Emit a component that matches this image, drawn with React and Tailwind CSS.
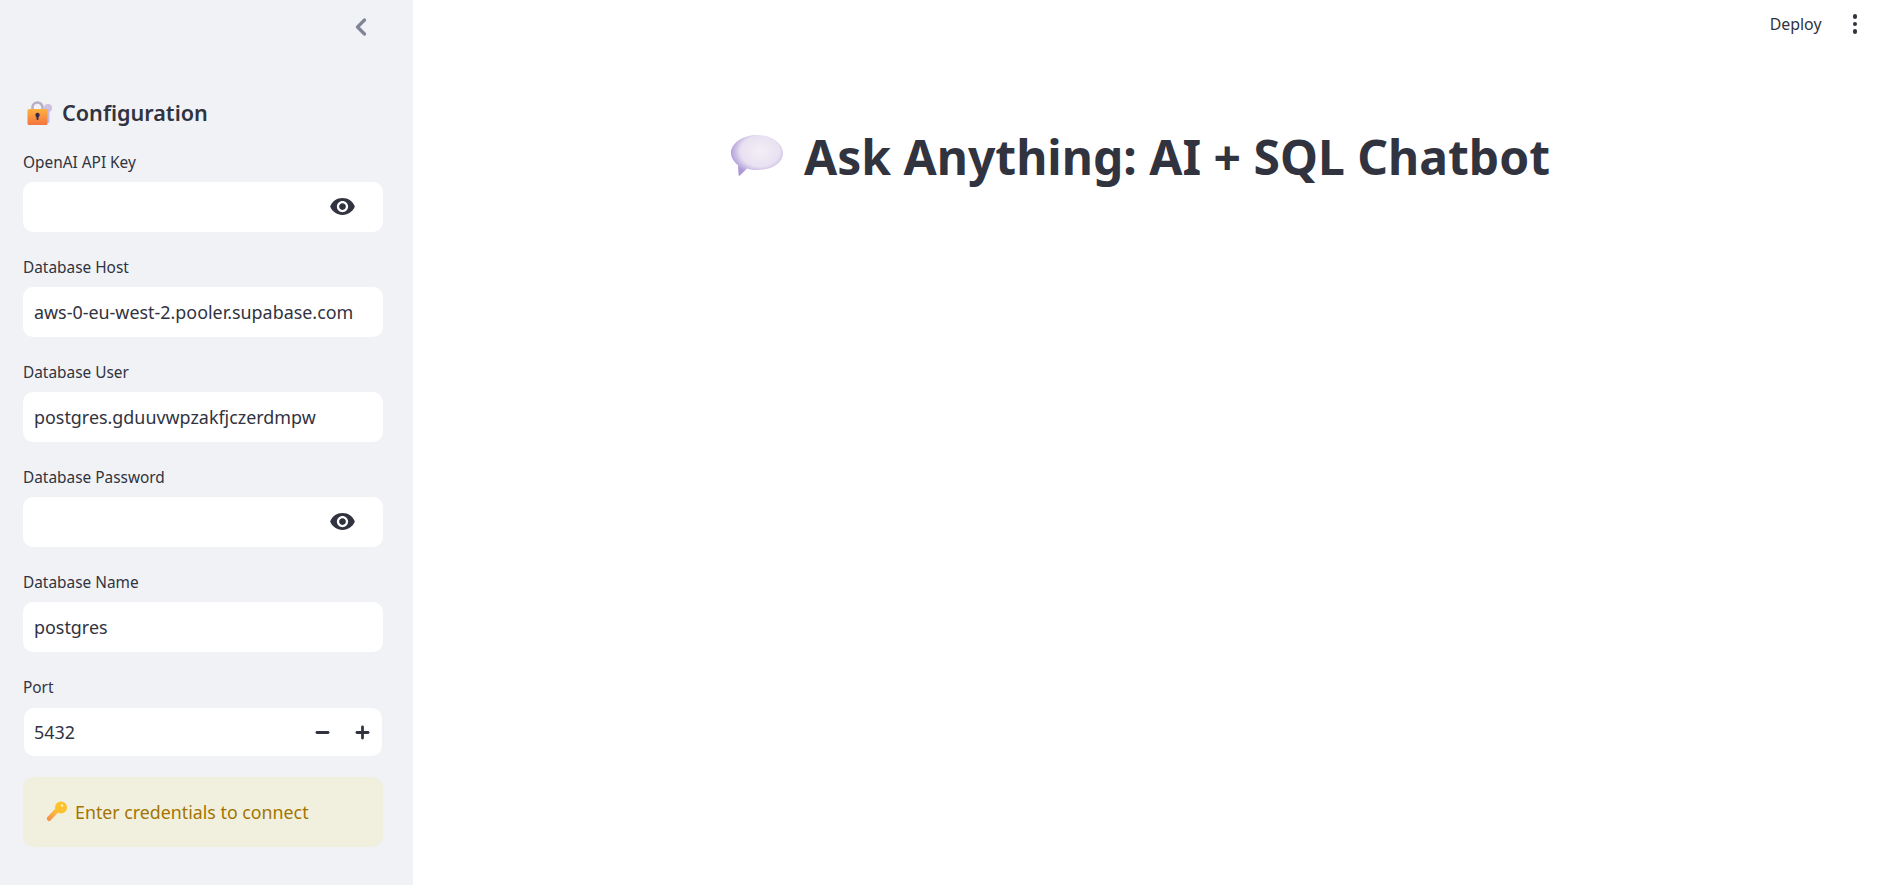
import React from "react";
import { ChevronLeft, Minus, Plus } from "lucide-react";

const font = { fontFamily: '"Noto Sans", "Liberation Sans", sans-serif' };

function LockEmoji() {
  return (
    <svg width="26" height="26" viewBox="0 0 26 26" className="shrink-0">
      <defs>
        <linearGradient id="lockBody" x1="0" y1="0" x2="0" y2="1">
          <stop offset="0" stopColor="#fdb23f" />
          <stop offset="1" stopColor="#f4743f" />
        </linearGradient>
      </defs>
      <circle cx="21" cy="8" r="4" fill="#cfc0e2" />
      <rect x="19" y="9" width="3.500" height="14" rx="1" fill="#c9b8de" />
      <path d="M5.500 10V7.500a5 5 0 0 1 10 0V10" fill="none" stroke="#b9afc4" strokeWidth="2.600" />
      <rect x="0.500" y="9" width="20" height="16" rx="1.500" fill="url(#lockBody)" />
      <circle cx="10.500" cy="15" r="2.200" fill="#3b2a4a" />
      <rect x="9.500" y="15.500" width="2" height="4.500" rx="1" fill="#3b2a4a" />
    </svg>
  );
}

function KeyEmoji() {
  return (
    <svg width="22" height="22" viewBox="0 0 22 22" className="shrink-0">
      <defs>
        <linearGradient id="keyFill" x1="1" y1="0" x2="0" y2="1">
          <stop offset="0" stopColor="#ffc933" />
          <stop offset="1" stopColor="#f58a4f" />
        </linearGradient>
      </defs>
      <path d="M1 16.500l8-8.500 3.500 3-8 8.500a2 2 0 0 1-2.900-.2c-.9-.7-1-1.900-.6-2.800z" fill="url(#keyFill)" />
      <circle cx="15" cy="6.500" r="6" fill="#fdc02f" />
      <circle cx="16" cy="4.500" r="1.200" fill="#fff0b0" />
    </svg>
  );
}

function BubbleEmoji() {
  return (
    <svg width="54" height="44" viewBox="0 0 54 44" className="shrink-0 mb-[2px]">
      <defs>
        <radialGradient id="bubbleFill" cx="0.56" cy="0.4" r="0.58">
          <stop offset="0" stopColor="#f3eff7" />
          <stop offset="0.65" stopColor="#e8e1f1" />
          <stop offset="1" stopColor="#ad99d8" />
        </radialGradient>
      </defs>
      <path d="M27 1c14 0 26 8 26 18S42 36 28 36c-4 0-8-.5-11-1.500L10 41.500c-.8.600-1.500.2-1.500-.8l-.5-9.500C4 28 1 23.500 1 19 1 9 13 1 27 1z" fill="url(#bubbleFill)" />
    </svg>
  );
}

function EyeFilled() {
  return (
    <svg width="27" height="27" viewBox="0 0 24 24" fill="#31333f" className="mr-[27px] mb-[2px] shrink-0">
      <path d="M12 4.500C7 4.500 2.730 7.610 1 12c1.730 4.390 6 7.500 11 7.500s9.270-3.110 11-7.500c-1.730-4.390-6-7.500-11-7.500zM12 17c-2.760 0-5-2.240-5-5s2.240-5 5-5 5 2.240 5 5-2.240 5-5 5zm0-8c-1.660 0-3 1.340-3 3s1.340 3 3 3 3-1.340 3-3-1.340-3-3-3z" />
    </svg>
  );
}

function Field({ label, value, secret }) {
  return (
    <div className="mb-[25px]">
      <div className="h-[20px] mb-[10px] text-[15.400px] leading-[22px] text-[#31333f]">{label}</div>
      <div className="h-[50px] rounded-[10px] bg-white flex items-center pl-[11px] text-[#31333f] text-[17.900px]">
        <div className="flex-1">{value}</div>
        {secret && <EyeFilled />}
      </div>
    </div>
  );
}

function NumberField({ label, value }) {
  return (
    <div className="mb-[25px]">
      <div className="h-[20px] mb-[10px] text-[15.400px] leading-[22px] text-[#31333f]">{label}</div>
      <div className="h-[50px] p-[1px]">
        <div className="h-full rounded-[10px] bg-white flex items-center pl-[10px] text-[#31333f] text-[17.900px]">
          <div className="flex-1">{value}</div>
          <div className="flex items-center mr-[10px] gap-[21px]">
            <Minus size={19} strokeWidth={3.500} />
            <Plus size={19} strokeWidth={3.500} />
          </div>
        </div>
      </div>
    </div>
  );
}

export default function App() {
  return (
    <div className="flex h-[885px] w-full bg-white overflow-hidden text-[#31333f]" style={font}>
      <aside className="w-[413px] shrink-0 h-full bg-[#f0f2f6] pl-[23px] pr-[30px]">
        <div className="h-[54px] flex items-center justify-end pr-[8px]">
          <ChevronLeft size={28} strokeWidth={2.800} className="text-[#808495]" />
        </div>
        <div className="mt-[44px] h-[30px] flex items-center gap-[9px] pl-[4px] text-[21.600px] font-semibold">
          <LockEmoji />
          <span>Configuration</span>
        </div>
        <div className="mt-[24px]">
          <Field label="OpenAI API Key" secret />
          <Field label="Database Host" value="aws-0-eu-west-2.pooler.supabase.com" />
          <Field label="Database User" value="postgres.gduuvwpzakfjczerdmpw" />
          <Field label="Database Password" secret />
          <Field label="Database Name" value="postgres" />
          <NumberField label="Port" value="5432" />
        </div>
        <div className="-mt-[5px] h-[70px] rounded-[10px] bg-[#f1f0df] flex items-center gap-[7px] pl-[23px] text-[17.800px] text-[#a37500]">
          <KeyEmoji />
          <span>Enter credentials to connect</span>
        </div>
      </aside>
      <main className="flex-1 min-w-0">
        <header className="h-[48px] flex items-center justify-end">
          <span className="text-[15.900px] mr-[31px] pt-[1px]">Deploy</span>
          <div className="mr-[34px] flex flex-col gap-[3px] items-center">
            <span className="w-[4.500px] h-[4.500px] rounded-full bg-[#31333f]" />
            <span className="w-[4.500px] h-[4.500px] rounded-full bg-[#31333f]" />
            <span className="w-[4.500px] h-[4.500px] rounded-full bg-[#31333f]" />
          </div>
        </header>
        <div className="mt-[72px] flex items-center justify-center gap-[20px] pr-[24px]">
          <BubbleEmoji />
          <h1 className="text-[48px] font-bold leading-[74px] text-[#31333f]">Ask Anything: AI + SQL Chatbot</h1>
        </div>
      </main>
    </div>
  );
}
